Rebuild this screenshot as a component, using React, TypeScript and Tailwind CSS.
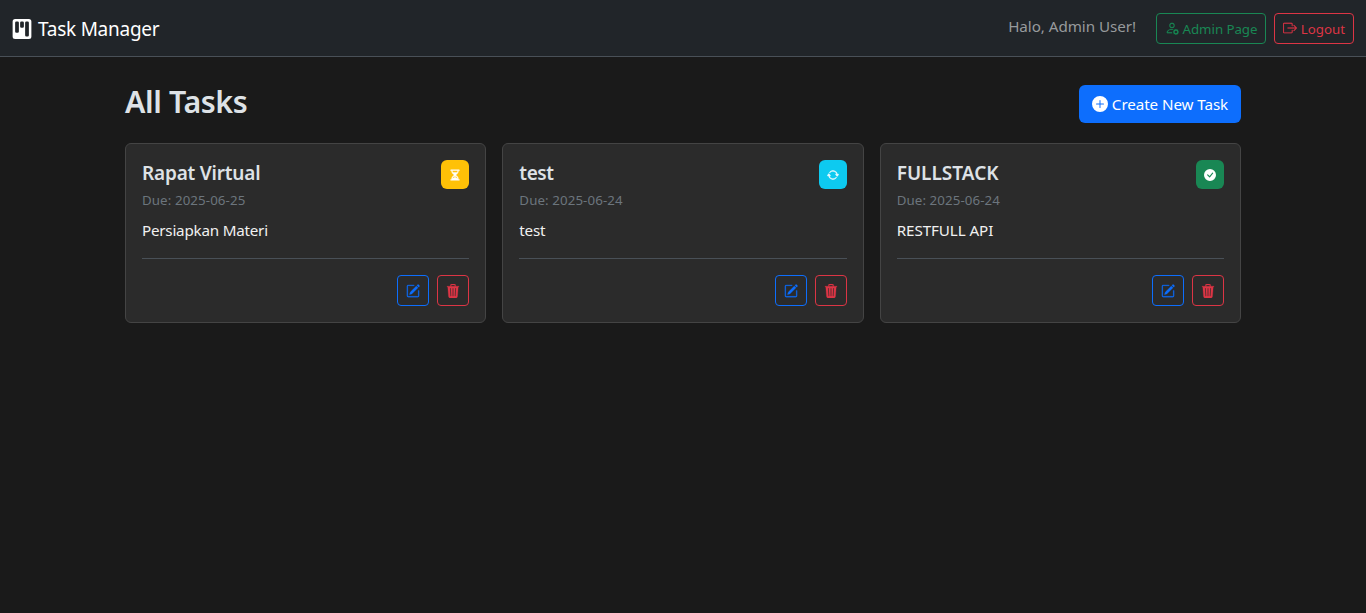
import {
  BsKanbanFill,
  BsPersonGear,
  BsBoxArrowRight,
  BsPlusCircleFill,
  BsHourglassSplit,
  BsArrowRepeat,
  BsCheckCircleFill,
  BsPencilSquare,
  BsTrash3Fill,
} from "react-icons/bs";
import type { IconType } from "react-icons";

type Task = {
  title: string;
  titleStyle: string;
  due: string;
  text: string;
  textStyle: string;
  badge: string;
  iconStyle: string;
  Icon: IconType;
};

const tasks: Task[] = [
  {
    title: "Rapat Virtual",
    titleStyle: "tracking-[-0.2px]",
    due: "2025-06-25",
    text: "Persiapkan Materi",
    textStyle: "tracking-[-0.22px]",
    badge: "bg-[#ffc107]",
    iconStyle: "stroke-[0.6]",
    Icon: BsHourglassSplit,
  },
  {
    title: "test",
    titleStyle: "tracking-[-0.4px]",
    due: "2025-06-24",
    text: "test",
    textStyle: "tracking-[-0.2px]",
    badge: "bg-[#0dcaf0]",
    iconStyle: "stroke-[0.6]",
    Icon: BsArrowRepeat,
  },
  {
    title: "FULLSTACK",
    titleStyle: "tracking-normal",
    due: "2025-06-24",
    text: "RESTFULL API",
    textStyle: "tracking-[-0.08px]",
    badge: "bg-[#198754]",
    iconStyle: "stroke-0",
    Icon: BsCheckCircleFill,
  },
];

function TaskCard({ task }: { task: Task }) {
  const { Icon } = task;
  return (
    <article className="flex h-[180px] flex-col rounded-md border border-[#444444] bg-[#2b2b2b] p-4">
      <div className="flex items-start justify-between">
        <h5 className={"pt-px whitespace-nowrap text-[19px] leading-6 font-semibold text-[#dee2e6] " + task.titleStyle}>
          <span>{task.title}</span>
        </h5>
        <span className={"flex h-[29px] w-7 items-center justify-center rounded-md text-white " + task.badge}>
          <Icon size={12} className={task.iconStyle} />
        </span>
      </div>
      <p className="mt-[1px] h-[21px] text-[13.3px] leading-[21px] tracking-[0.1px] text-[#6c757d]">
        <span>Due: {task.due}</span>
      </p>
      <p className={"mt-[7px] h-6 text-[15.2px] leading-6 text-[#f1f1f1] " + task.textStyle}>
        <span>{task.text}</span>
      </p>
      <div className="mt-4 flex justify-end gap-2 border-t border-[#495057] pt-4">
        <button aria-label="Edit" className="flex h-[31px] w-8 items-center justify-center rounded border border-[#0d6efd] text-[#0d6efd]">
          <BsPencilSquare size={14} className="stroke-[0.3]" />
        </button>
        <button aria-label="Delete" className="flex h-[31px] w-8 items-center justify-center rounded border border-[#dc3545] text-[#dc3545]">
          <BsTrash3Fill size={14} className="stroke-[0.3]" />
        </button>
      </div>
    </article>
  );
}

export default function App() {
  return (
    <div className="min-h-screen bg-[#1a1a1a] font-['Noto_Sans',sans-serif]">
      <nav className="flex h-[57px] items-center justify-between border-b border-[#495057] bg-[#212529] px-3">
        <div className="flex items-center gap-[6px] pt-[2px] text-[19px] tracking-[-0.25px] text-white">
          <BsKanbanFill size={20} />
          <span>Task Manager</span>
        </div>
        <div className="flex items-center">
          <span className="mr-5 mb-1 text-[15.2px] tracking-[-0.05px] text-[#979a9c]">Halo, Admin User!</span>
          <button className="mr-2 flex h-[31px] w-[110px] items-center justify-center gap-1 rounded border border-[#198754] text-[13.3px] tracking-[-0.05px] text-[#198754]">
            <BsPersonGear size={14} className="stroke-[0.2]" />
            <span className="pt-[3px]">Admin Page</span>
          </button>
          <button className="flex h-[31px] w-20 items-center justify-center gap-1 rounded border border-[#dc3545] text-[13.3px] text-[#dc3545]">
            <BsBoxArrowRight size={14} className="stroke-[0.2]" />
            <span className="pt-[3px]">Logout</span>
          </button>
        </div>
      </nav>
      <main className="mx-auto w-[1116px] pt-[25px]">
        <div className="mb-5 flex items-center justify-between">
          <h2 className="-mt-0.5 text-[30.4px] leading-[38px] font-semibold tracking-[-0.4px] text-[#dee2e6]">
            <span>All Tasks</span>
          </h2>
          <button className="mt-[3px] flex h-[38px] w-[162px] items-center justify-center gap-1 rounded-md bg-[#0d6efd] text-[15.2px] tracking-[-0.08px] text-white">
            <BsPlusCircleFill size={16} />
            <span>Create New Task</span>
          </button>
        </div>
        <div className="grid grid-cols-3 gap-4">
          {tasks.map((task) => (
            <TaskCard key={task.title} task={task} />
          ))}
        </div>
      </main>
    </div>
  );
}
